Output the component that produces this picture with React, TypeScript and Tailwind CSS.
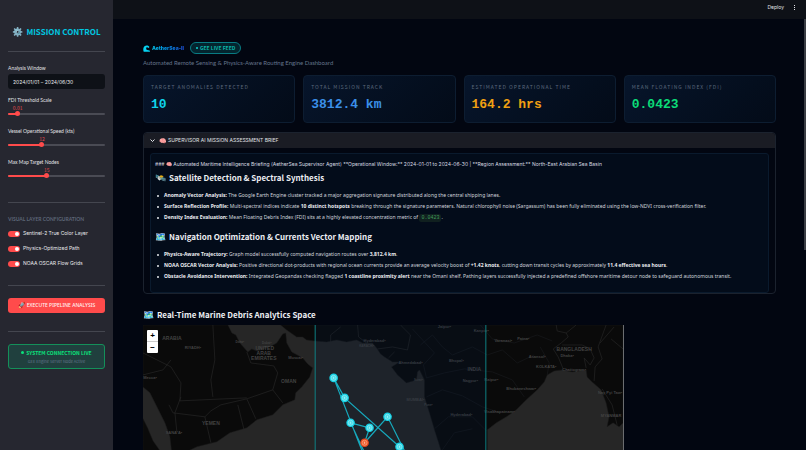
import { useState } from "react";
import type { ReactNode } from "react";

const SANS = "font-['Noto_Sans_CJK_SC','Noto_Sans',sans-serif]";

function Divider() {
  return <hr className="h-px border-0 bg-[#44464f]" />;
}

type SliderProps = { id: string; label: string; min: number; max: number; step: number; initial: number };

function Slider({ id, label, min, max, step, initial }: SliderProps) {
  const [value, setValue] = useState(initial);
  const pct = ((value - min) / (max - min)) * 100;
  return (
    <div className="flex h-[20px] flex-col">
      <label htmlFor={id} className="h-[8px] font-[Lato,sans-serif] text-[5px] leading-[8px] text-[#e2e3e6]">
        {label}
      </label>
      <div className="relative h-[7px]">
        <output
          htmlFor={id}
          className="absolute top-0 -translate-x-1/2 text-[5px] leading-[7px] text-[#e0474c]"
          style={{ left: pct + "%" }}
        >
          {value}
        </output>
      </div>
      <div className="relative flex h-[5px] items-center">
        <div className="h-[2px] w-full rounded-full bg-[#4a4b54]">
          <div className="h-full rounded-full bg-[#ff4b4b]" style={{ width: pct + "%" }} />
        </div>
        <input
          id={id}
          type="range"
          min={min}
          max={max}
          step={step}
          value={value}
          onChange={(e) => setValue(Number(e.target.value))}
          className="absolute -inset-x-[3px] top-0 h-[5px] w-[calc(100%+6px)] appearance-none bg-transparent [&::-webkit-slider-thumb]:size-[5px] [&::-webkit-slider-thumb]:appearance-none [&::-webkit-slider-thumb]:rounded-full [&::-webkit-slider-thumb]:bg-[#ff4b4b]"
        />
      </div>
    </div>
  );
}

function Toggle({ id, label }: { id: string; label: string }) {
  return (
    <label
      htmlFor={id}
      className="flex h-[7px] items-center gap-[3px] font-[Inter,sans-serif] text-[5px] leading-[7px] text-[#e8e9ec]"
    >
      <input
        id={id}
        type="checkbox"
        defaultChecked
        className="flex h-[6px] w-[12px] shrink-0 appearance-none items-center justify-start rounded-full bg-[#55565f] px-px before:size-[4px] before:rounded-full before:bg-white checked:justify-end checked:bg-[#ff4b4b]"
      />
      {label}
    </label>
  );
}

function Sidebar() {
  return (
    <aside className="flex w-[113px] shrink-0 flex-col bg-[#262730] px-[8px] pt-[25px]">
      <h1 className="flex items-center justify-center gap-[3px] text-[8px] leading-[14px] font-bold whitespace-nowrap text-[#00c8e0]">
        <span className="text-[9px]">⚙️</span>MISSION CONTROL
      </h1>
      <div className="mt-[12px]">
        <Divider />
      </div>
      <div className="mt-[12px] flex flex-col gap-[2px]">
        <label htmlFor="window" className="h-[8px] font-[Lato,sans-serif] text-[5px] leading-[8px] text-[#e2e3e6]">
          Analysis Window
        </label>
        <input
          id="window"
          type="text"
          defaultValue="2024/01/01 – 2024/06/30"
          className="h-[15px] w-full rounded-[3px] bg-[#0e1117] px-[5px] font-[Inter,sans-serif] text-[5px] text-[#e8e9ec]"
        />
      </div>
      <div className="mt-[7px] flex flex-col gap-[11px]">
        <Slider id="fdi" label="FDI Threshold Scale" min={0} max={0.1} step={0.01} initial={0.01} />
        <Slider id="speed" label="Vessel Operational Speed (kts)" min={5} max={25} step={1} initial={12} />
        <Slider id="nodes" label="Max Map Target Nodes" min={5} max={30} step={1} initial={15} />
      </div>
      <div className="mt-[24px]">
        <Divider />
      </div>
      <h2 className="mt-[12px] font-[Lato,sans-serif] text-[5px] leading-[8px] font-bold whitespace-nowrap text-[#5d6678]">
        VISUAL LAYER CONFIGURATION
      </h2>
      <div className="mt-[7px] flex flex-col gap-[8px]">
        <Toggle id="truecolor" label="Sentinel-2 True Color Layer" />
        <Toggle id="path" label="Physics-Optimized Path" />
        <Toggle id="flow" label="NOAA OSCAR Flow Grids" />
      </div>
      <div className="mt-[18px]">
        <Divider />
      </div>
      <button
        type="button"
        className="mt-[12px] flex h-[15px] items-center justify-center gap-[2px] rounded-[3px] bg-[#ff4b4b] font-['Noto_Sans',sans-serif] text-[5px] font-medium whitespace-nowrap text-[#fff0f0]"
      >
        <span className="text-[6px]">🚀</span>EXECUTE PIPELINE ANALYSIS
      </button>
      <div className="mt-[18px]">
        <Divider />
      </div>
      <div className="mt-[12px] flex h-[25px] flex-col items-center justify-center rounded-[3px] border border-[#14905a] bg-[#20403e]">
        <p className="flex items-center gap-[2px] text-[5px] leading-[9px] font-bold text-[#0be07c]">
          <span className="size-[3px] rounded-full bg-[#0be07c]" />
          SYSTEM CONNECTION LIVE
        </p>
        <p className="text-[4px] leading-[8px] text-[#64748b]">GEE Engine Server Node Active</p>
      </div>
    </aside>
  );
}

function Metric({ label, value, tone }: { label: string; value: string; tone: string }) {
  return (
    <section className="flex h-[48px] flex-col rounded-[4px] border border-[#0d1d31] bg-linear-135 from-[#07152b] to-[#030b18] px-[7px] pt-[7px]">
      <h2 className="text-[5px] leading-[8px] tracking-[0.200em] whitespace-nowrap text-[#5b687c]">{label}</h2>
      <p className={"mt-[6px] font-['Liberation_Mono',monospace] text-[13px] leading-[16px] font-bold whitespace-nowrap " + tone}>
        {value}
      </p>
    </section>
  );
}

function BriefHeading({ icon, children }: { icon: string; children: ReactNode }) {
  return (
    <h3 className="flex items-center gap-[3px] text-[8px] leading-[12px] font-bold text-[#eceef2]">
      <span className="text-[9px]">{icon}</span>
      {children}
    </h3>
  );
}

function Item({ term, children }: { term: string; children: ReactNode }) {
  return (
    <li className="relative h-[11px] pl-[9px] font-['Noto_Sans',sans-serif] text-[5px] leading-[11px] whitespace-nowrap text-[#d2d6dd] before:absolute before:top-[5px] before:left-[2px] before:size-[2px] before:rounded-full before:bg-[#e5e7eb]">
      <b className="text-[#eceef2]">{term}</b> {children}
    </li>
  );
}

function Brief() {
  return (
    <details open className="mt-[9px] rounded-[4px] border border-[#1b222e]">
      <summary className="flex h-[15px] list-none items-center gap-[4px] rounded-t-[3px] bg-[#1a1c24] px-[6px] font-[Inter,sans-serif] text-[5px] text-[#e0e2e6]">
        <svg viewBox="0 0 10 10" className="size-[5px] fill-none stroke-[#e0e2e6] stroke-2">
          <path d="M1 3l4 4 4-4" />
        </svg>
        <span className="flex items-center gap-[2px]">
          <span className="text-[6px]">🧠</span>SUPERVISOR AI MISSION ASSESSMENT BRIEF
        </span>
      </summary>
      <div className="mx-[6px] mt-[5px] rounded-[3px] border border-[#0a1a2d] bg-[#030c1a] px-[4px] pt-[6px] pb-[10px]">
        <p className="font-[Inter,sans-serif] text-[5px] leading-[9px] whitespace-nowrap text-[#d8dbe1]">
          ### 🧠 Automated Maritime Intelligence Briefing (AetherSea Supervisor Agent) **Operational Window:** 2024-01-01
          to 2024-06-30 | **Region Assessment:** North-East Arabian Sea Basin
        </p>
        <div className="mt-[3px]">
          <BriefHeading icon="🛰️">Satellite Detection &amp; Spectral Synthesis</BriefHeading>
        </div>
        <ul className="mt-[6px]">
          <Item term="Anomaly Vector Analysis:">
            The Google Earth Engine cluster tracked a major aggregation signature distributed along the central shipping
            lanes.
          </Item>
          <Item term="Surface Reflection Profile:">
            Multi-spectral indices indicate <b className="text-[#eceef2]">10 distinct hotspots</b> breaking through the
            signature parameters. Natural chlorophyll noise (Sargassum) has been fully eliminated using the low-NDVI
            cross-verification filter.
          </Item>
          <Item term="Density Index Evaluation:">
            Mean Floating Debris Index (FDI) sits at a highly elevated concentration metric of{" "}
            <code className="rounded-[2px] bg-[#10201f] px-[2px] py-px font-['Liberation_Mono',monospace] text-[5px] text-[#3f9a5b]">
              0.0423
            </code>
            .
          </Item>
        </ul>
        <div className="mt-[8px]">
          <BriefHeading icon="🗺️">Navigation Optimization &amp; Currents Vector Mapping</BriefHeading>
        </div>
        <ul className="mt-[6px]">
          <Item term="Physics-Aware Trajectory:">
            Graph model successfully computed navigation routes over <b className="text-[#eceef2]">3,812.4 km</b>.
          </Item>
          <Item term="NOAA OSCAR Vector Analysis:">
            Positive directional dot-products with regional ocean currents provide an average velocity boost of{" "}
            <b className="text-[#eceef2]">+1.42 knots</b>, cutting down transit cycles by approximately{" "}
            <b className="text-[#eceef2]">11.4 effective sea hours</b>.
          </Item>
          <Item term="Obstacle Avoidance Intervention:">
            Integrated Geopandas checking flagged <b className="text-[#eceef2]">1 coastline proximity alert</b> near the
            Omani shelf. Pathing layers successfully injected a predefined offshore maritime detour node to safeguard
            autonomous transit.
          </Item>
        </ul>
      </div>
    </details>
  );
}

const PLACES: [number, number, number, string][] = [
  [29, 15, 5, "ARABIA"],
  [50, 24, 4, "RIYADH•"],
  [97, 18, 3, "Doha•"],
  [124, 19, 3, "Dubai•"],
  [122, 25, 5, "UNITED"],
  [121, 30, 5, "ARAB"],
  [121, 35, 5, "EMIRATES"],
  [153, 34, 4, "Muscat•"],
  [146, 58, 5, "OMAN"],
  [68, 100, 5, "YEMEN"],
  [31, 109, 4, "SANA'A•"],
  [7, 54, 4, "Mecca•"],
  [232, 17, 4, "Hyderabad•"],
  [224, 22, 3, "KARACHI•"],
  [268, 39, 4, "Ahmedabad•"],
  [276, 56, 3, "Surat•"],
  [273, 76, 4, "MUMBAI•"],
  [286, 81, 3, "Pune•"],
  [302, 3, 4, "Jaipur•"],
  [314, 37, 4, "Bhopal•"],
  [332, 46, 5, "INDIA"],
  [328, 57, 4, "Nagpur•"],
  [319, 91, 4, "Hyderabad•"],
  [339, 7, 4, "Kanpur•"],
  [361, 17, 4, "Varanasi•"],
  [381, 15, 4, "Patna•"],
  [395, 33, 4, "Asansol•"],
  [404, 43, 4, "KOLKATA•"],
  [432, 26, 5, "BANGLADESH"],
  [425, 32, 4, "Dhaka•"],
  [432, 46, 4, "Chattogram•"],
  [349, 56, 4, "Raipur•"],
  [379, 65, 4, "Bhubaneshwar•"],
  [357, 88, 4, "Visakhapatnam•"],
  [468, 69, 4, "Nay Pyi Taw•"],
  [469, 92, 4, "MYANMAR"],
];

const STOPS: [number, number][] = [
  [191, 53],
  [202, 73],
  [208, 98],
  [227, 103],
  [245, 92],
  [257, 122],
];

function MarineMap() {
  return (
    <div className="relative mt-[3px] w-[76%] shrink-0 overflow-hidden border-r border-[#6b6d70] bg-[#262626]">
      <svg viewBox="0 0 481 240" className="block w-full" role="img" aria-label="Marine debris map">
        <g className="fill-[#0a0a0a] stroke-[#1b1b1b]" strokeWidth="0.5">
          <path d="M0 0H85L89 8L93 10L97 18L105 27L109 24L114 26L121 24L127 22L134 18L140 9L143 8L144 18L149 27L160 33L165 39L170 43L167 52L159 62L153 68L152 75L140 80L130 90L114 95L104 103L87 108L74 117L54 122L37 130H29L27 112L22 98L14 82L7 68L0 62Z" />
          <path d="M0 94L5 104L10 116L17 126V240H0Z" />
          <path d="M138 0L144 5L154 12L160 12L164 15L172 16L184 17L194 15L204 17L214 15L220 18L230 18L234 23L238 29L242 32L250 37L257 37L249 42L255 50L264 58L274 55L275 47L277 45L282 55V72L287 88L292 105L300 130L310 170L330 180L345 130V105L354 98L364 92L374 85L384 75L395 65L402 57L405 50L412 46L420 45L430 47L444 45L445 52L450 57L459 65L464 78L467 92L465 102L471 98L477 102L481 98V0Z" />
        </g>
        <g className="fill-none stroke-[#2a2a2a]" strokeWidth="0.6">
          <path d="M104 27L108 38L131 41L135 48L130 65L104 74L78 80L68 86L62 92L30 88L26 80M104 74L113 94M130 65L140 78" />
          <path d="M70 0L72 35L68 55L70 72M0 28L28 42L38 58L37 76L104 73M38 72L32 88L34 108M62 92L68 118M0 50L20 45L28 35M95 80L101 104" />
          <path d="M188 17V10L198 2M215 0L216 12L224 18M235 24L250 22L265 25L268 10L258 0M252 27L246 33" />
          <path d="M414 0L415 6L424 8L426 12L419 18L411 24L416 32L421 44M424 8L434 0M420 20L440 20L448 24L452 33L448 40L442 33L444 43M464 0L456 22L460 34L453 42L452 56M458 18L472 2M469 14L481 24M460 64L470 80L475 100" />
        </g>
        <g className="fill-none stroke-[#191b1e]" strokeWidth="0.6">
          <path d="M278 20L290 10L300 22L310 30L330 22L345 30L360 25L375 38L392 30M284 53L302 48L322 44L350 47L370 55L382 72M284 72L300 65L320 71L340 82L358 88M270 4L292 28L281 40L284 53M338 0L350 14L372 18L395 10L410 16M292 104L306 92L330 92L344 106M300 125L312 108L330 104M398 22L407 38L405 50" />
        </g>
        <g className="fill-[#424242] font-['Liberation_Sans',sans-serif] font-bold" textAnchor="middle">
          {PLACES.map(([x, y, size, name]) => (
            <text key={name + x} x={x} y={y} fontSize={size}>
              {name}
            </text>
          ))}
        </g>
        <rect x="172.500" y="-10" width="171" height="260" className="fill-[#001a3a]/20 stroke-[#0f7f83]" />
        <g className="fill-none stroke-[#16a9bd]" strokeWidth="1.200">
          <path d="M191 53L202 73L257 122M191 53L221 130M208 98L227 103L222 118L245 92L264 130M208 98L223 130" />
        </g>
        {STOPS.map(([x, y]) => (
          <g key={x}>
            <circle cx={x} cy={y} r="4.300" className="fill-[#17d2e6]" />
            <circle cx={x} cy={y} r="2.600" className="fill-[#4fdeea] stroke-[#a5f0f5]" strokeWidth="0.6" />
            <path d={`M${x} ${y - 1}v2`} className="stroke-[#c5f6f9]" strokeWidth="0.7" />
          </g>
        ))}
        <circle cx="222" cy="118" r="4.300" className="fill-[#e8471c]" />
        <circle cx="222" cy="118" r="2.600" className="fill-[#ee6a3e] stroke-[#ffb08a]" strokeWidth="0.6" />
        <path d="M222 117v2" className="stroke-[#ffd9c4]" strokeWidth="0.7" />
      </svg>
      <div className="absolute top-[5px] left-[4px] flex w-[11px] flex-col divide-y divide-[#ccc] rounded-[1px] bg-white text-center font-['Liberation_Sans',sans-serif] text-[8px] leading-[11px] font-bold text-black">
        <button type="button" aria-label="Zoom in">
          +
        </button>
        <button type="button" aria-label="Zoom out">
          −
        </button>
      </div>
    </div>
  );
}

export default function App() {
  return (
    <div className={"flex h-screen overflow-hidden bg-[#020611] " + SANS}>
      <Sidebar />
      <div className="relative flex min-w-0 flex-1 flex-col">
        <header className="flex h-[19px] shrink-0 items-center justify-end gap-[8px] bg-[#0e1117] pr-[10px] pb-[4px]">
          <button type="button" className="font-[Inter,sans-serif] text-[5px] leading-[9px] text-[#e2e4e8]">
            Deploy
          </button>
          <button type="button" aria-label="Menu" className="flex w-[4px] flex-col items-center gap-px">
            <span className="size-[1px] bg-[#e2e4e8]" />
            <span className="size-[1px] bg-[#e2e4e8]" />
            <span className="size-[1px] bg-[#e2e4e8]" />
          </button>
        </header>
        <main className="flex min-h-0 flex-1 flex-col px-[30px] pt-[23px] [&>*]:shrink-0">
          <div className="flex h-[12px] items-center">
            <svg viewBox="0 0 20 20" className="size-[7px]" aria-hidden="true">
              <path
                d="M18 5C15 1 9 0 5 3C0 7 0 14 2 19H20C20 16 18 15 15 15C11 15 9 13 9 10C9 7 12 5 14 8C16 9 18 8 18 5Z"
                className="fill-[#06d3f2]"
              />
            </svg>
            <span className="ml-[2px] bg-linear-to-r from-[#08bfe8] to-[#1d4ed8] bg-clip-text font-[Inter,sans-serif] text-[5px] leading-[9px] font-black text-transparent">
              AetherSea-II
            </span>
            <span className="ml-[6px] flex h-[12px] items-center gap-[2px] rounded-full border border-[#087b83] bg-[#04252f] px-[5px] text-[5px] leading-[8px] font-bold text-[#0bb5ac]">
              <span className="size-[2px] rounded-full bg-[#0fd5d0]" />
              GEE LIVE FEED
            </span>
          </div>
          <p className="mt-[4px] font-[Lato,sans-serif] text-[6px] leading-[9px] text-[#64748b]">
            Automated Remote Sensing &amp; Physics-Aware Routing Engine Dashboard
          </p>
          <div className="mt-[8px] grid grid-cols-4 gap-[8px]">
            <Metric label="TARGET ANOMALIES DETECTED" value="10" tone="text-[#0fd3ea]" />
            <Metric label="TOTAL MISSION TRACK" value="3812.4 km" tone="text-[#3b8fe8]" />
            <Metric label="ESTIMATED OPERATIONAL TIME" value="164.2 hrs" tone="text-[#f0a012]" />
            <Metric label="MEAN FLOATING INDEX (FDI)" value="0.0423" tone="text-[#0bdc78]" />
          </div>
          <Brief />
          <h2 className="mt-[14px] flex items-center gap-[3px] text-[8px] leading-[14px] font-bold text-[#eceef2]">
            <span className="text-[9px]">🗺️</span>Real-Time Marine Debris Analytics Space
          </h2>
          <MarineMap />
        </main>
        <div className="absolute top-[19px] right-0 h-[231px] w-[2px] bg-[#3a3d44]" />
      </div>
    </div>
  );
}
